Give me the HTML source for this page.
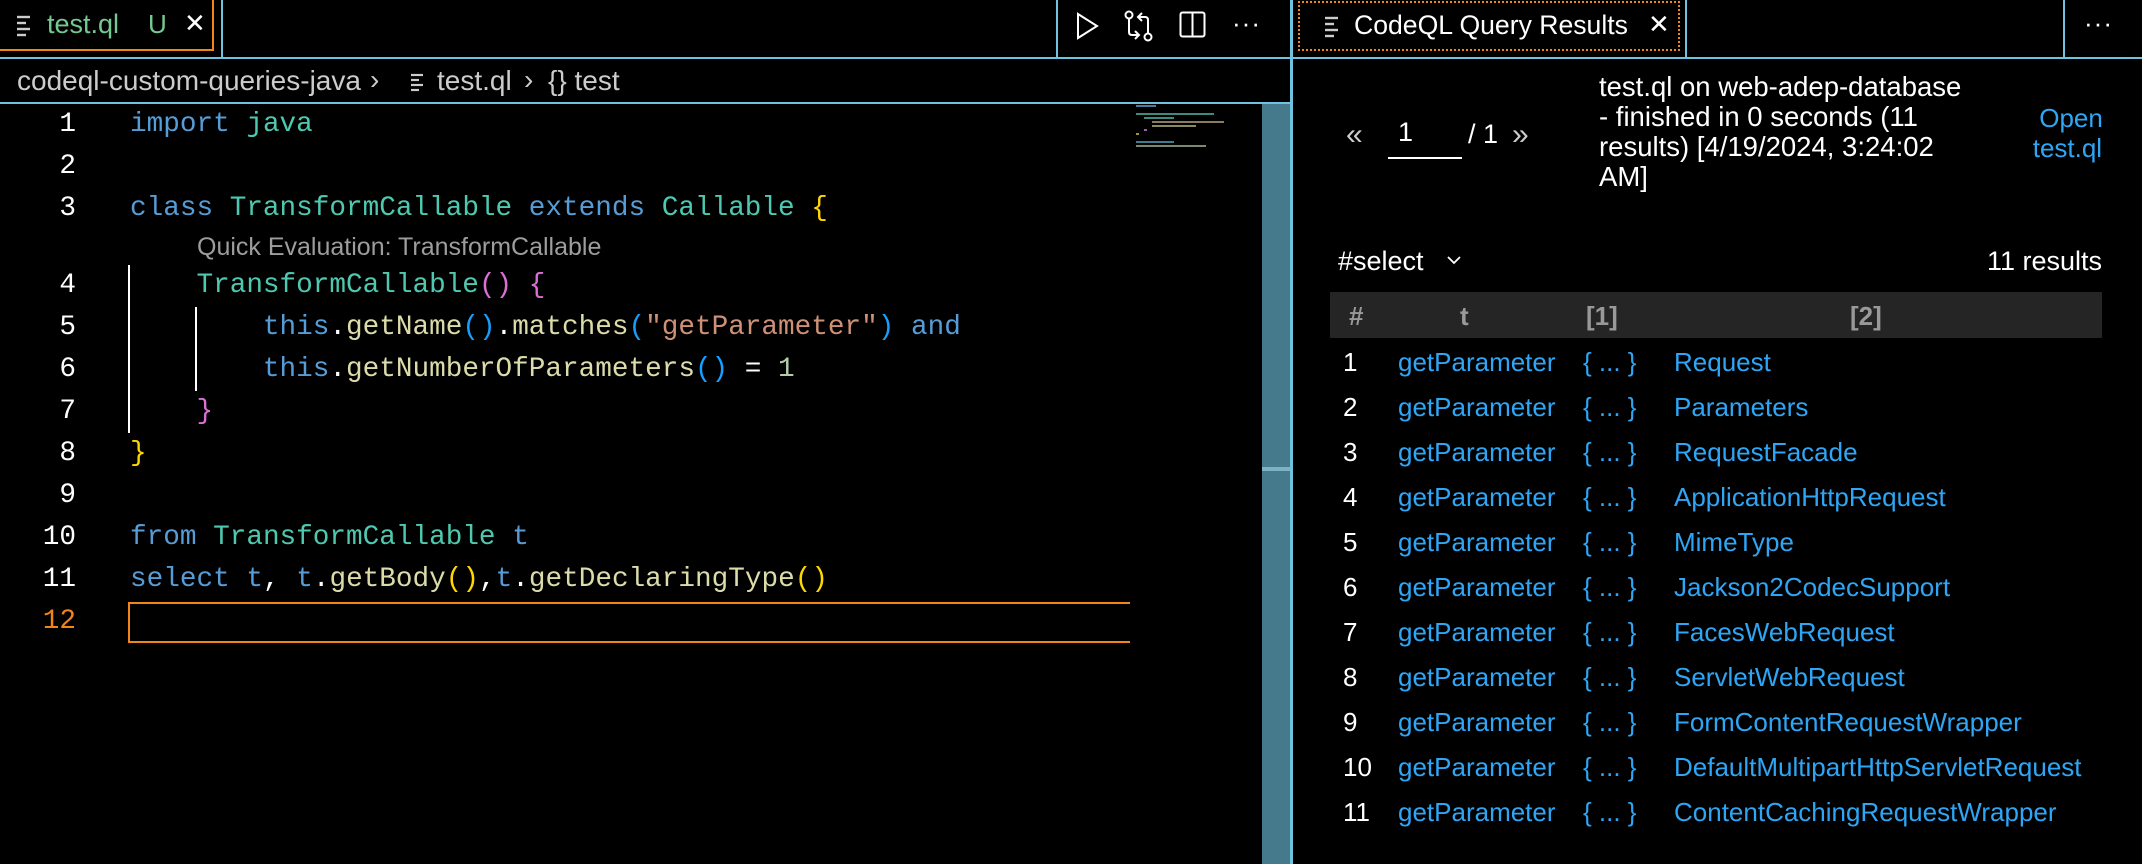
<!DOCTYPE html>
<html><head><meta charset="utf-8"><style>
*{margin:0;padding:0;box-sizing:border-box}
body{width:2142px;height:864px;background:#000;overflow:hidden;position:relative;font-family:"Liberation Sans",sans-serif;color:#fff}
.a{position:absolute;white-space:pre}
.code{font-family:"Liberation Mono",monospace;font-size:27.7px;line-height:42px}
.ln{position:absolute;left:0;width:76px;text-align:right;font-family:"Liberation Mono",monospace;font-size:27.7px;line-height:42px;color:#fff}
.k{color:#569cd6}.t{color:#4ec9b0}.f{color:#dcdcaa}.s{color:#ce9178}.n{color:#b5cea8}.y{color:#ffd700}.p{color:#da70d6}.b{color:#179fff}.w{color:#fff}
.row{position:absolute;left:1330px;width:772px;height:45px;font-size:26px;line-height:45px}
.row span{position:absolute;top:0}
.lk{color:#2ea6f5}
</style></head><body>
<!-- left tab bar -->
<div class="a" style="left:0;top:0;width:214px;height:51px;border-right:2px solid #f38518;border-bottom:2px solid #f38518"></div>
<svg class="a" style="left:16px;top:15px" width="18" height="22" viewBox="0 0 18 22"><g stroke="#ccc" stroke-width="2.4"><line x1="1" y1="2" x2="14" y2="2"/><line x1="1" y1="8" x2="10" y2="8"/><line x1="1" y1="14" x2="14" y2="14"/><line x1="1" y1="20" x2="10" y2="20"/></g></svg>
<div class="a" style="left:47px;top:9px;font-size:27px;color:#73c991">test.ql</div>
<div class="a" style="left:148px;top:9px;font-size:26px;color:#73c991">U</div>
<div class="a" style="left:184px;top:8px;font-size:26px;color:#fff">✕</div>
<div class="a" style="left:221px;top:0;width:2px;height:58px;background:#6fc3df"></div>
<div class="a" style="left:1056px;top:0;width:2px;height:58px;background:#6fc3df"></div>
<svg class="a" style="left:1076px;top:12px" width="24" height="28" viewBox="0 0 24 28"><path d="M2 2 L21 14 L2 26 Z" fill="none" stroke="#fff" stroke-width="2"/></svg>
<svg class="a" style="left:1124px;top:10px" width="32" height="32" viewBox="0 0 32 32"><g fill="none" stroke="#fff" stroke-width="2"><circle cx="5" cy="5" r="3.5"/><circle cx="24" cy="27" r="3.5"/><path d="M5 9 V22 Q5 25 8 25 H14 M11 21 L15 25 L11 29"/><path d="M24 23 V10 Q24 7 21 7 H15 M18 3 L14 7 L18 11"/></g></svg>
<svg class="a" style="left:1179px;top:11px" width="28" height="28" viewBox="0 0 28 28"><rect x="1.5" y="1.5" width="24" height="24" rx="2" fill="none" stroke="#fff" stroke-width="2"/><line x1="13.5" y1="1.5" x2="13.5" y2="25.5" stroke="#fff" stroke-width="2"/></svg>
<div class="a" style="left:1232px;top:8px;font-size:26px;letter-spacing:1px">···</div>
<div class="a" style="left:0;top:57px;width:1292px;height:2px;background:#6fc3df"></div>
<!-- breadcrumb -->
<div class="a" style="left:17px;top:65px;font-size:28px;color:#ccc">codeql-custom-queries-java</div>
<div class="a" style="left:370px;top:64px;font-size:28px;color:#ccc">›</div>
<svg class="a" style="left:410px;top:73px" width="16" height="20" viewBox="0 0 16 20"><g stroke="#ccc" stroke-width="2.2"><line x1="1" y1="2" x2="13" y2="2"/><line x1="1" y1="7" x2="9" y2="7"/><line x1="1" y1="12" x2="13" y2="12"/><line x1="1" y1="17" x2="9" y2="17"/></g></svg>
<div class="a" style="left:437px;top:65px;font-size:28px;color:#ccc">test.ql</div>
<div class="a" style="left:524px;top:64px;font-size:28px;color:#ccc">›</div>
<div class="a" style="left:548px;top:65px;font-size:28px;color:#ccc">{} test</div>
<div class="a" style="left:0;top:102px;width:1292px;height:2px;background:#6fc3df"></div>
<!-- editor -->
<div class="ln" style="top:104px">1</div>
<div class="ln" style="top:146px">2</div>
<div class="ln" style="top:188px">3</div>
<div class="ln" style="top:265px">4</div>
<div class="ln" style="top:307px">5</div>
<div class="ln" style="top:349px">6</div>
<div class="ln" style="top:391px">7</div>
<div class="ln" style="top:433px">8</div>
<div class="ln" style="top:475px">9</div>
<div class="ln" style="top:517px">10</div>
<div class="ln" style="top:559px">11</div>
<div class="ln" style="top:601px;color:#f38518">12</div>
<div class="a code" style="left:130px;top:104px"><span class="k">import</span> <span class="t">java</span></div>
<div class="a code" style="left:130px;top:188px"><span class="k">class</span> <span class="t">TransformCallable</span> <span class="k">extends</span> <span class="t">Callable</span> <span class="y">{</span></div>
<div class="a" style="left:197px;top:233px;font-size:25px;color:#9d9d9d">Quick Evaluation: TransformCallable</div>
<div class="a code" style="left:130px;top:265px">    <span class="t">TransformCallable</span><span class="p">()</span> <span class="p">{</span></div>
<div class="a code" style="left:130px;top:307px">        <span class="k">this</span><span class="w">.</span><span class="f">getName</span><span class="b">()</span><span class="w">.</span><span class="f">matches</span><span class="b">(</span><span class="s">"getParameter"</span><span class="b">)</span> <span class="k">and</span></div>
<div class="a code" style="left:130px;top:349px">        <span class="k">this</span><span class="w">.</span><span class="f">getNumberOfParameters</span><span class="b">()</span> <span class="w">=</span> <span class="n">1</span></div>
<div class="a code" style="left:130px;top:391px">    <span class="p">}</span></div>
<div class="a code" style="left:130px;top:433px"><span class="y">}</span></div>
<div class="a code" style="left:130px;top:517px"><span class="k">from</span> <span class="t">TransformCallable</span> <span class="k">t</span></div>
<div class="a code" style="left:130px;top:559px"><span class="k">select</span> <span class="k">t</span><span class="w">,</span> <span class="k">t</span><span class="w">.</span><span class="f">getBody</span><span class="y">()</span><span class="w">,</span><span class="k">t</span><span class="w">.</span><span class="f">getDeclaringType</span><span class="y">()</span></div>
<div class="a" style="left:128px;top:265px;width:2px;height:168px;background:#fff"></div>
<div class="a" style="left:195px;top:307px;width:2px;height:84px;background:#fff"></div>
<div class="a" style="left:128px;top:602px;width:1002px;height:41px;border:2px solid #f38518;border-right:none"></div>
<!-- minimap -->
<svg class="a" style="left:1134px;top:104px" width="120" height="50" viewBox="0 0 120 50"><g stroke-width="2">
<line x1="2" y1="2" x2="22" y2="2" stroke="#4a7aa0"/>
<line x1="2" y1="10" x2="80" y2="10" stroke="#3e8a80"/>
<line x1="10" y1="14" x2="40" y2="14" stroke="#3e8a80"/>
<line x1="18" y1="18" x2="90" y2="18" stroke="#8a7a60"/>
<line x1="18" y1="22" x2="62" y2="22" stroke="#8a8a60"/>
<line x1="10" y1="26" x2="13" y2="26" stroke="#a060a0"/>
<line x1="2" y1="30" x2="5" y2="30" stroke="#a09040"/>
<line x1="2" y1="38" x2="40" y2="38" stroke="#3e7a90"/>
<line x1="2" y1="42" x2="72" y2="42" stroke="#7a8a70"/>
</g></svg>
<div class="a" style="left:1262px;top:104px;width:28px;height:760px;background:#457a8c"></div>
<div class="a" style="left:1262px;top:467px;width:28px;height:4px;background:#7fb0c4"></div>
<div class="a" style="left:1290px;top:0;width:3px;height:864px;background:#6fc3df"></div>
<!-- right panel -->
<div class="a" style="left:1298px;top:1px;width:382px;height:50px;border:2px dotted #f38518"></div>
<svg class="a" style="left:1324px;top:16px" width="18" height="22" viewBox="0 0 18 22"><g stroke="#ccc" stroke-width="2.4"><line x1="1" y1="2" x2="14" y2="2"/><line x1="1" y1="8" x2="10" y2="8"/><line x1="1" y1="14" x2="14" y2="14"/><line x1="1" y1="20" x2="10" y2="20"/></g></svg>
<div class="a" style="left:1354px;top:10px;font-size:26.6px">CodeQL Query Results</div>
<div class="a" style="left:1648px;top:9px;font-size:26px">✕</div>
<div class="a" style="left:1685px;top:0;width:2px;height:58px;background:#6fc3df"></div>
<div class="a" style="left:2063px;top:0;width:2px;height:58px;background:#6fc3df"></div>
<div class="a" style="left:2084px;top:8px;font-size:26px;letter-spacing:1px">···</div>
<div class="a" style="left:1292px;top:57px;width:850px;height:2px;background:#6fc3df"></div>
<div class="a" style="left:1346px;top:118px;font-size:30px;color:#ccc">«</div>
<div class="a" style="left:1398px;top:117px;font-size:27px">1</div>
<div class="a" style="left:1388px;top:157px;width:74px;height:2px;background:#fff"></div>
<div class="a" style="left:1468px;top:119px;font-size:27px">/ 1</div>
<div class="a" style="left:1512px;top:118px;font-size:30px;color:#ccc">»</div>
<div class="a" style="left:1599px;top:72px;font-size:27.5px;line-height:30px">test.ql on web-adep-database
- finished in 0 seconds (11
results) [4/19/2024, 3:24:02
AM]</div>
<div class="a lk" style="left:2032px;top:103px;font-size:26px;line-height:30px;text-align:center"> Open
test.ql</div>
<div class="a" style="left:1338px;top:246px;font-size:27px">#select</div>
<svg class="a" style="left:1446px;top:254px" width="16" height="12" viewBox="0 0 16 12"><path d="M2 3 L8 9 L14 3" fill="none" stroke="#fff" stroke-width="1.8"/></svg>
<div class="a" style="left:1960px;top:246px;font-size:27px;width:142px;text-align:right">11 results</div>
<div class="a" style="left:1330px;top:292px;width:772px;height:46px;background:#252526"></div>
<div class="a" style="left:1349px;top:301px;font-size:26px;font-weight:bold;color:#999">#</div>
<div class="a" style="left:1460px;top:301px;font-size:26px;font-weight:bold;color:#999">t</div>
<div class="a" style="left:1586px;top:301px;font-size:26px;font-weight:bold;color:#999">[1]</div>
<div class="a" style="left:1850px;top:301px;font-size:26px;font-weight:bold;color:#999">[2]</div>
<div class="row" style="top:340px"><span style="left:13px">1</span><span class="lk" style="left:68px">getParameter</span><span class="lk" style="left:253px">{ ... }</span><span class="lk" style="left:344px">Request</span></div>
<div class="row" style="top:385px"><span style="left:13px">2</span><span class="lk" style="left:68px">getParameter</span><span class="lk" style="left:253px">{ ... }</span><span class="lk" style="left:344px">Parameters</span></div>
<div class="row" style="top:430px"><span style="left:13px">3</span><span class="lk" style="left:68px">getParameter</span><span class="lk" style="left:253px">{ ... }</span><span class="lk" style="left:344px">RequestFacade</span></div>
<div class="row" style="top:475px"><span style="left:13px">4</span><span class="lk" style="left:68px">getParameter</span><span class="lk" style="left:253px">{ ... }</span><span class="lk" style="left:344px">ApplicationHttpRequest</span></div>
<div class="row" style="top:520px"><span style="left:13px">5</span><span class="lk" style="left:68px">getParameter</span><span class="lk" style="left:253px">{ ... }</span><span class="lk" style="left:344px">MimeType</span></div>
<div class="row" style="top:565px"><span style="left:13px">6</span><span class="lk" style="left:68px">getParameter</span><span class="lk" style="left:253px">{ ... }</span><span class="lk" style="left:344px">Jackson2CodecSupport</span></div>
<div class="row" style="top:610px"><span style="left:13px">7</span><span class="lk" style="left:68px">getParameter</span><span class="lk" style="left:253px">{ ... }</span><span class="lk" style="left:344px">FacesWebRequest</span></div>
<div class="row" style="top:655px"><span style="left:13px">8</span><span class="lk" style="left:68px">getParameter</span><span class="lk" style="left:253px">{ ... }</span><span class="lk" style="left:344px">ServletWebRequest</span></div>
<div class="row" style="top:700px"><span style="left:13px">9</span><span class="lk" style="left:68px">getParameter</span><span class="lk" style="left:253px">{ ... }</span><span class="lk" style="left:344px">FormContentRequestWrapper</span></div>
<div class="row" style="top:745px"><span style="left:13px">10</span><span class="lk" style="left:68px">getParameter</span><span class="lk" style="left:253px">{ ... }</span><span class="lk" style="left:344px">DefaultMultipartHttpServletRequest</span></div>
<div class="row" style="top:790px"><span style="left:13px">11</span><span class="lk" style="left:68px">getParameter</span><span class="lk" style="left:253px">{ ... }</span><span class="lk" style="left:344px">ContentCachingRequestWrapper</span></div>
</body></html>
